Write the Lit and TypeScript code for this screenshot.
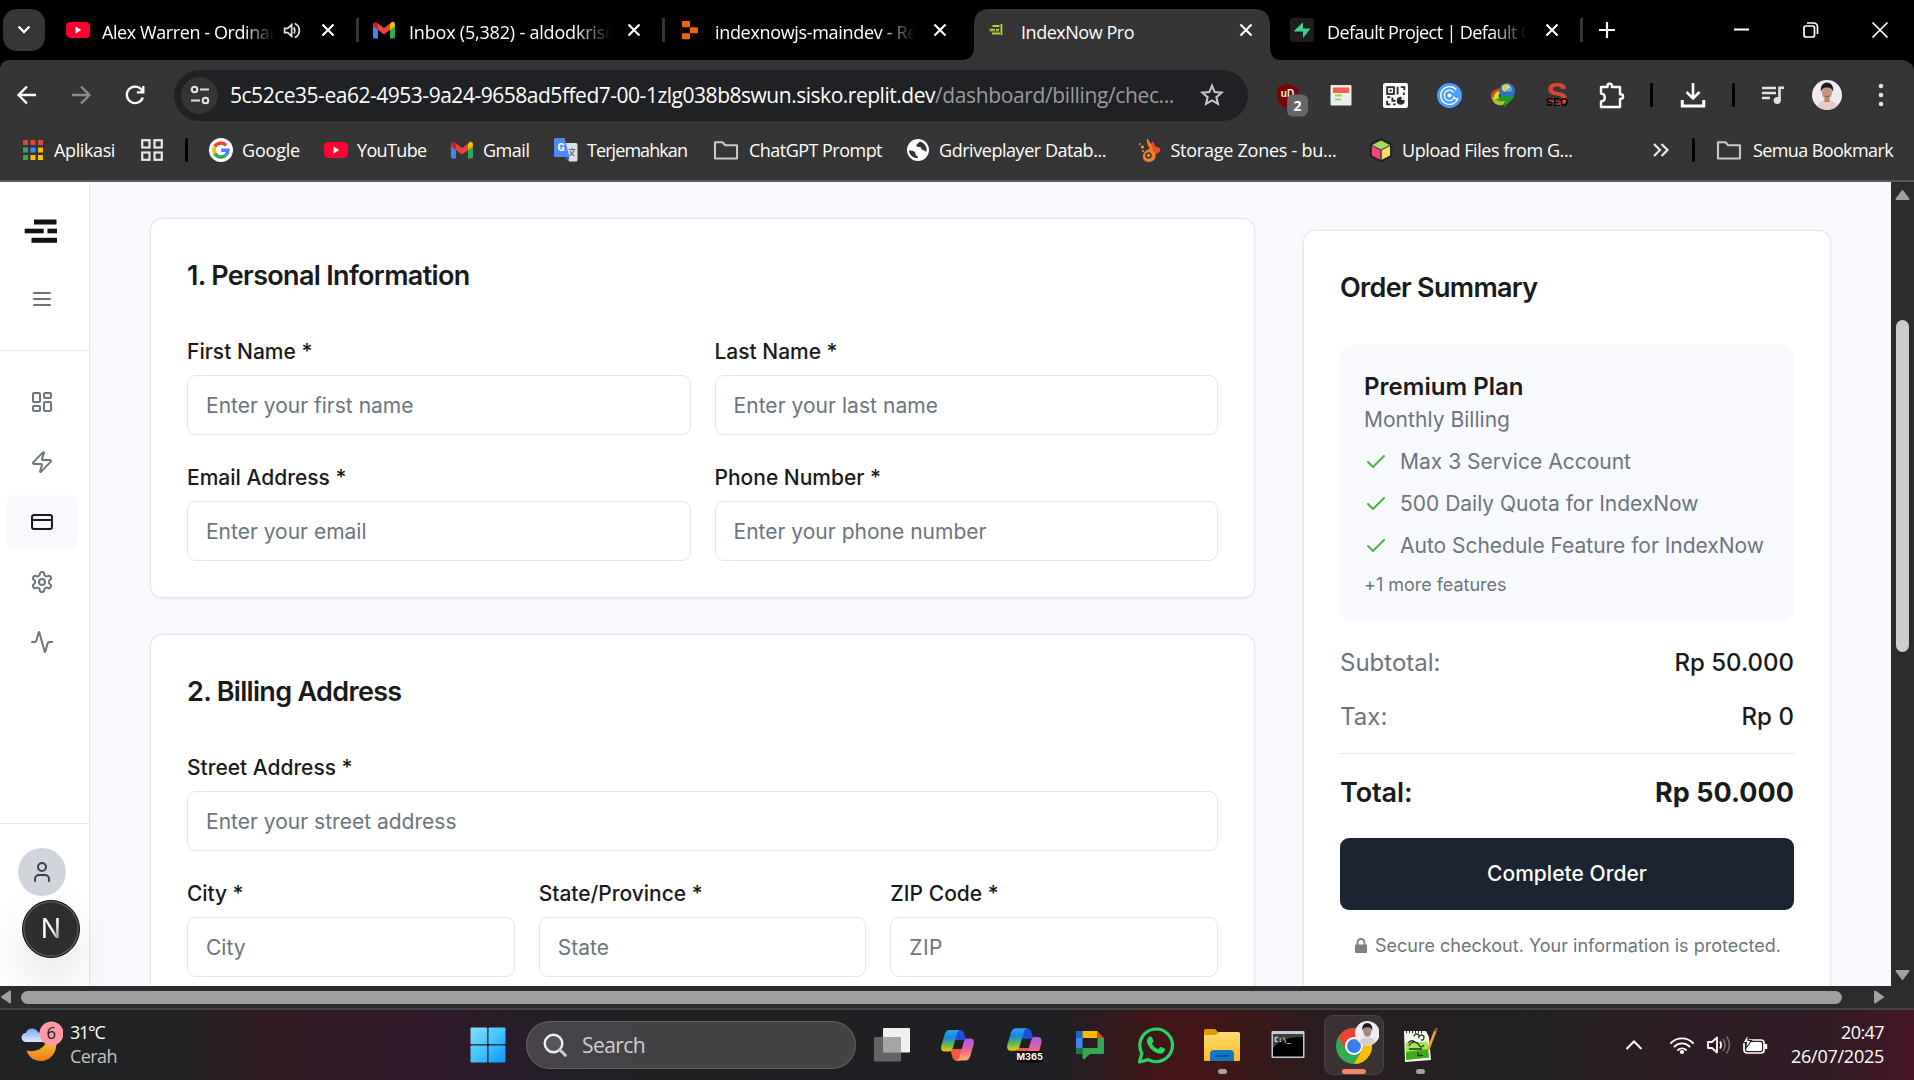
import { LitElement, html, css, svg, nothing } from "lit";
import { customElement, property } from "lit/decorators.js";
import { styleMap } from "lit/directives/style-map.js";

/* A single line of text tracked so that it fills a given advance width. */
@customElement("fit-text")
class FitText extends LitElement {
  static styles = css`
    :host { display: inline-block; white-space: pre; flex: none; }
    .t { display: inline-block; white-space: pre; }
  `;
  @property({ type: Number }) w = 0;
  @property() text = "";
  updated() {
    const el = this.renderRoot.querySelector(".t") as HTMLElement;
    el.style.letterSpacing = "0px";
    const natural = el.getBoundingClientRect().width;
    if (this.w > 0 && natural > 0) {
      el.style.letterSpacing = (this.w - natural) / this.text.length + "px";
    }
  }
  render() {
    return html`<span class="t">${this.text}</span>`;
  }
}

const t = (text: string, w: number) => html`<fit-text .text=${text} .w=${w}></fit-text>`;

const box = (w: number, h: number, vb: string, body: unknown) =>
  html`<svg width=${w} height=${h} viewBox=${vb} fill="none">${body}</svg>`;

const lucide = (body: unknown, size = 24) =>
  html`<svg width=${size} height=${size} viewBox="0 0 24 24" fill="none" stroke="currentColor" stroke-width="2" stroke-linecap="round" stroke-linejoin="round">${body}</svg>`;

/* ---------- browser icons ---------- */
const youtube = box(24, 24, "0 0 24 24", svg`
  <rect x="0" y="4" width="24" height="16" rx="4.2" fill="#ff0033"/><path d="M9.6 8.6v6.8l5.6-3.4z" fill="#fff"/>`);
const gmail = box(24, 24, "0 0 24 24", svg`
  <path d="M1 6v13a1.4 1.4 0 0 0 1.4 1.4H6V10z" fill="#4285f4"/>
  <path d="M23 6v13a1.4 1.4 0 0 1-1.4 1.4H18V10z" fill="#34a853"/>
  <path d="M18 5.8V12l5-3.8V6.4c0-2.3-2.3-3.4-3.9-2z" fill="#fbbc04"/>
  <path d="M6 12V5.4l6 4.6 6-4.6V12l-6 4.6z" fill="#ea4335"/>
  <path d="M1 6.4v1.8L6 12V5.4L4.9 4.5C3.3 3.2 1 4.2 1 6.4z" fill="#c5221f"/>`);
const replit = box(24, 24, "0 0 24 24", svg`
  <g fill="#f26207"><rect x="4" y="3" width="8" height="6.2" rx="1"/><rect x="11.8" y="9.2" width="8.2" height="6" rx="1"/><rect x="4" y="15.2" width="8" height="6" rx="1"/></g>`);
const indexFav = box(24, 24, "0 0 24 24", svg`
  <g fill="#b5cf3a"><rect x="8.5" y="7" width="7" height="2"/><rect x="5.5" y="10.8" width="5.5" height="2"/><rect x="12" y="10.800" width="3" height="2"/><rect x="8" y="14.500" width="8" height="2"/><rect x="16.500" y="6" width="1.800" height="11"/></g><rect x="6" y="12.800" width="9" height="1" fill="#6f8030"/>`);
const supabase = box(24, 24, "0 0 24 24", svg`
  <rect width="24" height="24" rx="3" fill="#1c1f1e"/><path d="M13 4.2v6.3h6.3c.7 0 .9.6.5 1.1L13 20.1v-6.6H4.8c-.6 0-.8-.6-.4-1.1z" fill="#3ecf8e"/>`);
const speaker = box(21, 21, "0 0 24 24", svg`
  <path d="M3 9.5v5h3.500l4.500 4V5.500l-4.500 4z" stroke="#e3e3e3" stroke-width="2"/><path d="M13.500 8.500q2.200 3.500 0 7M14.500 4c7 2.500 7 13.500 0 16" stroke="#e3e3e3" stroke-width="2"/>`);
const closeX = box(14, 14, "0 0 14 14", svg`<path d="M1.5 1.5l11 11m0-11l-11 11" stroke="#fff" stroke-width="2.2"/>`);
const back = box(24, 24, "0 0 24 24", svg`<path d="M21 12H4M12 3.5L3.5 12l8.5 8.5" stroke="#fff" stroke-width="2.3"/>`);
const forward = box(24, 24, "0 0 24 24", svg`<path d="M3 12h17M12 3.5l8.5 8.5-8.5 8.5" stroke="#8b8b8b" stroke-width="2.3"/>`);
const reload = box(24, 24, "0 0 24 24", svg`<path d="M19.8 14.5A8.2 8.2 0 1 1 18.3 6.5l2 2.3" stroke="#fff" stroke-width="2.3"/><path d="M20.3 3v6.4h-6.4" stroke="#fff" stroke-width="2.3"/>`);
const tune = box(24, 24, "0 0 24 24", svg`<g stroke="#e3e3e3" stroke-width="2.1"><circle cx="6.5" cy="6.5" r="2.8"/><path d="M12 6.5h9M3 17.5h9"/><circle cx="17.5" cy="17.5" r="2.8"/></g>`);
const star = box(26, 26, "0 0 24 24", svg`<path d="M12 3.4l2.5 5.9 6.4.55-4.85 4.2 1.45 6.25L12 17l-5.5 3.3 1.45-6.25L3.1 9.85l6.4-.55z" stroke="#c7c7c7" stroke-width="1.9"/>`);
const ublock = box(32, 36, "0 0 32 36", svg`
  <path d="M11.5 2C15 4.8 18.5 5.8 22 6v9c0 6-4.5 10-10.5 12.5C5.5 25 1 21 1 15V6c3.5-.2 7-1.2 10.5-4z" fill="#800000"/>
  <text x="11.500" y="16.200" font-family="Inter, sans-serif" font-size="10" font-weight="600" fill="#fff" text-anchor="middle">uD</text>
  <rect x="11" y="13.5" width="21" height="22" rx="6" fill="#666"/>
  <text x="21.5" y="29.800" font-family="Open Sans, sans-serif" font-size="14" font-weight="700" fill="#fff" text-anchor="middle">2</text>`);
const pageExt = box(24, 24, "0 0 24 24", svg`
  <rect x="1.5" y="2" width="21" height="20.5" rx="1" fill="#eee"/><rect x="4" y="4.5" width="16" height="5.5" fill="#fa5a50"/><path d="M6 12.5h7M6 16.5h6" stroke="#97d94a" stroke-width="2"/>`);
const qr = box(25, 25, "0 0 24 24", svg`
  <rect width="24" height="24" rx="2" fill="#fff"/><g stroke="#2b2b2b" stroke-width="1.8"><rect x="4" y="4" width="6.5" height="6.5"/><path d="M14 3.5v7.5M17 4h3.5v3M20 9v2.5M4 13.5h3M9 14v3h3M4 17v3.5h3M9.5 20.5h2.5"/></g><circle cx="17" cy="17" r="3.8" fill="#2b2b2b"/><path d="M17.8 12.5v3.8h4z" fill="#fff"/><rect x="6.3" y="6.3" width="2" height="2" fill="#2b2b2b"/>`);
const spiral = box(25, 25, "0 0 24 24", svg`
  <circle cx="12" cy="12" r="12" fill="#4a9eff"/><g stroke="#fff" stroke-width="1.2"><path d="M18.5 6.5a8.5 8.5 0 1 0 1.500 8.500q-3 1-4-2"/><path d="M16 9a5 5 0 1 0 .7 4.5"/></g><circle cx="12" cy="12" r="1.900" fill="#fff"/>`);
const idm = box(26, 26, "0 0 26 26", svg`
  <path d="M2 17c-2-5 1-10 8-10.500l3 4c-4 1-5 3-3 5.500l7 1-4 6C8 24 3.500 22 2 17z" fill="#a9c32b"/><path d="M1.500 15c0-5 3-8 8-8.500l1 1.800c-4 .8-6.500 3-6.500 6.700z" fill="#e33b20"/><path d="M4.500 17c-.5-5 2-7.500 6.500-8l1 1.800c-3.500.8-5 2.700-4.500 6.200z" fill="#f3d21f"/>
  <circle cx="17" cy="9" r="8" fill="#2d6fc4"/><path d="M12 4c3-3 7-2.500 8 0s-3 2-3.500 4.500-4 1-4.500-1z" fill="#c9cf63"/><circle cx="19" cy="7" r="3" fill="#fff" opacity=".35"/>
  <path d="M11 14l14 .5-11 11 .8-6.500c-3.500.8-7 0-9-2 2.500.3 4.600-.6 5.200-3z" fill="#1f9d27"/>`);
const seo = box(28, 28, "0 0 28 28", svg`
  <text x="14" y="24" font-family="Liberation Sans, sans-serif" font-size="32" font-weight="700" fill="#dd4430" text-anchor="middle">S</text>
  <text x="14" y="25" font-family="Liberation Sans, sans-serif" font-size="10.5" font-weight="700" fill="#000" text-anchor="middle">SEO</text>`);
const puzzle = box(28, 28, "0 0 28 28", svg`
  <path d="M4 6h6.5V4.8a2.2 2.2 0 0 1 4.4 0V6H23v7.3h.8a2.3 2.3 0 0 1 0 4.6H23V26H4v-5.5c5-.3 5-7.7 0-8z" stroke="#fff" stroke-width="2.4" stroke-linejoin="round"/>`);
const download = box(26, 26, "0 0 26 26", svg`<path d="M13 1v15M6.5 10l6.5 6.5 6.5-6.5" stroke="#fff" stroke-width="2.6"/><path d="M2.3 18v6h21.4v-6" stroke="#fff" stroke-width="3"/>`);
const queue = box(26, 26, "0 0 26 26", svg`<path d="M2 6h14M2 11h14M2 16h8" stroke="#e3e3e3" stroke-width="2.3"/><path d="M19.5 19V5.8h4.5" stroke="#e3e3e3" stroke-width="2.6"/><circle cx="17.2" cy="18.5" r="3.5" fill="#e3e3e3"/>`);
const face = (s: number) => box(s, s, "0 0 30 30", svg`
  <circle cx="15" cy="15" r="15" fill="#efedf2"/><path d="M5.5 26.5c1-5 5-6.5 9.5-6.5s8.5 1.5 9.5 6.500A15 15 0 0 1 15 30a15 15 0 0 1-9.500-3.500z" fill="#e6cdc8"/>
  <rect x="12.5" y="16" width="5" height="6" fill="#b8836f"/><ellipse cx="15" cy="12.5" rx="5" ry="6.8" fill="#c2937f"/><path d="M9 12c-1-6 2-9.5 6-9.5s7 3.5 6 9.5c-1-3-2-4.500-6-4.500s-5 1.500-6 4.500z" fill="#1d1b22"/><path d="M13 16q2 1.200 4 0" stroke="#7c4a40" stroke-width=".8"/>`);
const dots = box(6, 26, "0 0 6 26", svg`<g fill="#e3e3e3"><circle cx="3" cy="4" r="2.3"/><circle cx="3" cy="13" r="2.3"/><circle cx="3" cy="22" r="2.3"/></g>`);
const appsGrid = box(24, 24, "0 0 24 24", svg`
  <g fill="#ea4335"><rect x="2" y="2" width="5" height="5"/><rect x="9.5" y="2" width="5" height="5"/><rect x="17" y="2" width="5" height="5"/></g>
  <rect x="2" y="9.5" width="5" height="5" fill="#34a853"/><rect x="9.5" y="9.5" width="5" height="5" fill="#4285f4"/><rect x="17" y="9.5" width="5" height="5" fill="#fbbc04"/>
  <rect x="2" y="17" width="5" height="5" fill="#34a853"/><rect x="9.5" y="17" width="5" height="5" fill="#fbbc04"/><rect x="17" y="17" width="5" height="5" fill="#fbbc04"/>`);
const squares = box(24, 24, "0 0 24 24", svg`<g stroke="#e8e8e8" stroke-width="2.2"><rect x="2.2" y="2.2" width="7.3" height="7.3"/><rect x="14.5" y="2.2" width="7.3" height="7.3"/><rect x="2.2" y="14.5" width="7.3" height="7.3"/><rect x="14.5" y="14.5" width="7.3" height="7.3"/></g>`);
const google = box(24, 24, "0 0 24 24", svg`
  <circle cx="12" cy="12" r="12" fill="#fff"/><g stroke-width="3.4">
  <path d="M17.1 7.3A7 7 0 0 0 5.9 8.6" stroke="#ea4335"/><path d="M5.9 8.6a7 7 0 0 0 0 6.8" stroke="#fbbc04"/><path d="M5.9 15.4a7 7 0 0 0 10.6 2" stroke="#34a853"/><path d="M16.5 17.4A7 7 0 0 0 19 12.2h-6.800" stroke="#4285f4"/></g>`);
const translate = box(24, 24, "0 0 24 24", svg`
  <path d="M9 5h13a1.5 1.5 0 0 1 1.5 1.5v15.5a1.5 1.5 0 0 1-1.5 1.5h-7z" fill="#dcdfe3"/><path d="M1.5 0h9l5 19H1.5A1.5 1.5 0 0 1 0 17.5v-16A1.5 1.5 0 0 1 1.5 0z" fill="#4f8af4"/><path d="M11 19h4.5l-2 4.5z" fill="#3457c0"/>
  <text x="7" y="13" font-family="Roboto, sans-serif" font-size="10.5" font-weight="700" fill="#fff" text-anchor="middle">G</text><path d="M14.5 11.5h7M18 9.8v1.7M20 11.5c-.6 3-2.5 5-4.5 6M16 13c.8 2.3 2.5 4 4.5 5" stroke="#67727e" stroke-width="1.2"/>`);
const folder = box(26, 24, "0 0 26 24", svg`<path d="M2 4.3h7.5l2.700 3H24v13.200H2z" stroke="#c9c9c9" stroke-width="2.1" stroke-linejoin="round"/>`);
const globe = box(24, 24, "0 0 24 24", svg`<circle cx="12" cy="12" r="11" fill="#fff"/><path d="M3 12.5c3 0 6.5.5 6.5 3.500 0 2 2.500 1.500 2.500 4-4.500.5-9-3-9-7.500zM13.500 3.500c-.5 2-2.500 1.500-3 3.500s2 2 3.500 2 1 3 3 3 1.500 2 3.500 1.500c.8-5-2.300-9-7-10z" fill="#353535"/>`);
const bunny = box(24, 24, "0 0 24 24", svg`
  <path d="M9 0l4 6 2-2 2 4.500 5 2-1 3.500-3.500 2c1 5-2.500 8-7 8-4 0-6-3-5.500-6.500C5.500 14 8 12 12 10.500 9.500 8 8.500 4 9 0z" fill="#f7811e"/><path d="M13 6l2-3 2 5.500 5.500 2-1 3.500-4 1.500-3-3z" fill="#ea5325"/><circle cx="10.500" cy="17.500" r="2.500" stroke="#353535" stroke-width="1.500"/><circle cx="4.500" cy="9" r="1.600" fill="#f7a11e"/><circle cx="1.800" cy="6" r=".9" fill="#f7a11e"/><circle cx="5" cy="13" r="1" fill="#f7a11e"/>`);
const cube = box(24, 24, "0 0 24 24", svg`
  <path d="M12 .8l10.500 5.400v11.600L12 23.400 1.500 17.800V6.200z" stroke="#111" stroke-width="1.6" stroke-dasharray="1.5 1.2"/><path d="M12 2.500l8.800 4.500L12 11.500 3.200 7z" fill="#a6d95c"/><path d="M3 8l8.300 4.300v9.400L3 17.500z" fill="#f2467c"/><path d="M21 8l-8.300 4.300v9.400L21 17.500z" fill="#f9dc5c"/>`);
const more = box(20, 16, "0 0 20 16", svg`<path d="M3 2l6 6-6 6M10.500 2l6 6-6 6" stroke="#e8e8e8" stroke-width="2.2"/>`);

/* ---------- taskbar icons ---------- */
const weather = box(42, 44, "0 0 42 44", svg`
  <defs><linearGradient id="mn" x1="0" y1="0" x2="0" y2="1"><stop offset="0" stop-color="#f6c23c"/><stop offset="1" stop-color="#f07a16"/></linearGradient><linearGradient id="cl" x1="0" y1="0" x2="0" y2="1"><stop offset="0" stop-color="#7fa4ee"/><stop offset="1" stop-color="#dfe9fb"/></linearGradient></defs>
  <path d="M35 20c2 10-5 20-15 20-7 0-12-3.500-14.500-10.500C15 32 23 27 26 20z" fill="url(#mn)"/>
  <path d="M5 21a4.500 4.500 0 0 1 0-9C6 7 13.500 5.500 17 11l6 3v7z" fill="url(#cl)"/>
  <circle cx="30.500" cy="12.500" r="12" fill="#ff99a4"/><text x="30.300" y="18.300" font-family="Open Sans, sans-serif" font-size="16.500" fill="#1a1a1a" text-anchor="middle">6</text>`);
const start = box(36, 36, "0 0 36 36", svg`
  <defs><linearGradient id="wn" x1="0" y1="0" x2="36" y2="36" gradientUnits="userSpaceOnUse"><stop offset="0" stop-color="#88dffd"/><stop offset=".5" stop-color="#43c4fb"/><stop offset="1" stop-color="#0a94fb"/></linearGradient></defs>
  <g fill="url(#wn)"><rect x=".5" y=".5" width="16.8" height="16.8" rx="1"/><rect x="18.5" y=".5" width="17" height="16.8" rx="1"/><rect x=".5" y="18.5" width="16.8" height="17" rx="1"/><rect x="18.5" y="18.5" width="17" height="17" rx="1"/></g>`);
const search = box(24, 24, "0 0 24 24", svg`<circle cx="10.5" cy="10.5" r="8.8" fill="#fff" fill-opacity=".1" stroke="#eee" stroke-width="2.4"/><path d="M16.8 16.8l5.500 5.500" stroke="#ccc" stroke-width="3" stroke-linecap="round"/>`);
const taskview = box(36, 36, "0 0 36 36", svg`<rect x="9" y="1" width="27" height="24.5" rx="1" fill="#f0f0f0"/><rect x="0" y="10" width="27" height="24.5" rx="1.5" fill="#6a6a6a" fill-opacity=".9"/><path d="M9 10h18v15.5H9z" fill="#a5a5a5"/>`);
const copilotBody = svg`
  <defs><linearGradient id="cp1" x1="0" y1="0" x2="0" y2="1"><stop offset="0" stop-color="#2aa4f4"/><stop offset=".35" stop-color="#1a86e0"/><stop offset=".65" stop-color="#5cb55a"/><stop offset="1" stop-color="#f6c800"/></linearGradient>
  <linearGradient id="cp2" x1="0" y1="0" x2="0" y2="1"><stop offset="0" stop-color="#a65cf5"/><stop offset=".5" stop-color="#f0609a"/><stop offset="1" stop-color="#ffb35c"/></linearGradient></defs>
  <path d="M10 22h13l-2 9c-.5 2-2 3-3.500 3-4 0-4.500-2-6-7z" fill="#f4573a"/><path d="M12 13h14l-2-7c-.8-2.600-2.500-3-5-3H13z" fill="#1c4fd6"/>
  <path d="M9.500 3H21c-2.500 0-3.500 2-4 4l-4 13.500C12.300 23 11 24.500 8.500 24.500H4.500C1 24.500.5 21 1.500 18l3-10C5.500 5 6.500 3 9.500 3z" fill="url(#cp1)"/>
  <path d="M27.500 11.500h3c3.500 0 4 3.500 3 6.500l-3 10.500c-1 3-2.500 5-5.500 5h-9.500c2.500 0 3.500-2 4-4l4-13.500c.7-2.500 1.500-4.500 4-4.500z" fill="url(#cp2)"/>`;
const copilot = box(36, 36, "0 0 36 36", copilotBody);
const m365 = box(38, 38, "0 0 38 38", svg`<g transform="translate(1 -1) scale(1.05)">${copilotBody}</g><rect x="11.5" y="25" width="26.500" height="12" rx="2" fill="#0c0c0c"/><text x="24.700" y="34.300" font-family="Inter, sans-serif" font-size="9.2" font-weight="700" fill="#fff" text-anchor="middle">M365</text>`);
const chat = box(30, 30, "0 0 30 30", svg`
  <rect x="1" y="1" width="6.5" height="7" fill="#1967d2"/><path d="M7.500 1h15v7h-15z" fill="#fbbc04"/><path d="M22.500 1l6.500 7h-6.500z" fill="#ea4335"/><path d="M1 8h6.500v10H1z" fill="#4285f4"/><path d="M1 18h6.500v6H1z" fill="#188038"/><path d="M22.500 8H29v14.500a1.500 1.500 0 0 1-1.500 1.500H15l-6 5.500-1.500-1V18h15z" fill="#34a853"/>`);
const whatsapp = box(38, 38, "0 0 38 38", svg`
  <path d="M2.500 36l2.400-8.800A16.300 16.300 0 1 1 11.300 33.600z" stroke="#25d366" stroke-width="3.200" stroke-linejoin="round"/>
  <path d="M13.500 10.500c1 0 1.300.2 1.700 1.200l1.300 3c.2.600 0 1-.3 1.400l-1.200 1.500c1.500 2.800 3.500 4.500 6.300 5.700l1.600-1.900c.4-.5.8-.6 1.400-.3l3.200 1.500c.5.300.6.6.5 1.200-.4 2.500-2.500 4-5 3.900-6.500-.8-12-6.300-13-12.200-.2-2.500 1.300-5 3.500-5z" fill="#25d366"/>`);
const explorer = box(38, 36, "0 0 38 36", svg`
  <defs><linearGradient id="fd" x1="0" y1="0" x2="0" y2="1"><stop offset="0" stop-color="#ffdc6e"/><stop offset="1" stop-color="#fcbc23"/></linearGradient></defs>
  <path d="M1 3.500A1.500 1.500 0 0 1 2.500 2H12l4 4-4 4H1z" fill="#dd9c10"/><path d="M1 8h12l3-3h19.500A1.500 1.500 0 0 1 37 6.500V33a1 1 0 0 1-1 1H2a1 1 0 0 1-1-1z" fill="url(#fd)"/><path d="M7 34v-7a4 4 0 0 1 4-4h16a4 4 0 0 1 4 4v7z" fill="#1476c6"/><path d="M12 29h14" stroke="#0b4f8e" stroke-width="1.500"/>`);
const cmd = box(34, 30, "0 0 34 30", svg`
  <rect x=".5" y="1" width="33" height="27" rx="1" fill="#c3ccd4"/><rect x="2" y="4" width="30" height="22.5" fill="#000"/><path d="M2 4h30v3C18 7 9 10 2 18z" fill="#3f3f3f"/><text x="3" y="12" font-family="DejaVu Sans Mono, monospace" font-size="7" font-weight="700" fill="#eee">C:\\_</text>`);
const chrome = box(50, 48, "0 0 50 48", svg`
  <g transform="translate(7 7)"><circle cx="18" cy="18" r="18" fill="#34a853"/><path d="M2.400 9A18 18 0 0 1 33.600 9H18a9 9 0 0 0-7.800 13.500z" fill="#ea4335"/><path d="M33.600 9A18 18 0 0 1 18 36l7.800-13.500A9 9 0 0 0 18 9z" fill="#fbbc04"/><circle cx="18" cy="18" r="9" fill="#fff"/><circle cx="18" cy="18" r="7" fill="#3b7ded"/></g>
  <g transform="translate(26 0) scale(.82)"><circle cx="15" cy="15" r="15" fill="#efedf2"/><path d="M5.500 26.500c1-5 5-6.500 9.500-6.500s8.500 1.500 9.500 6.500A15 15 0 0 1 15 30a15 15 0 0 1-9.500-3.500z" fill="#d9cdd0"/><ellipse cx="15" cy="12.500" rx="5" ry="6.800" fill="#a98680"/><path d="M9 12c-1-6 2-9.500 6-9.500s7 3.500 6 9.500c-1-3-2-4.500-6-4.500s-5 1.500-6 4.500z" fill="#1d1b22"/></g>`);
const notepad = box(36, 36, "0 0 36 36", svg`
  <path d="M2 4h22l3 6 2 23-26 2z" fill="#f4f4f0"/><path d="M4 5h18" stroke="#333" stroke-width="2.500" stroke-dasharray="1 2"/><path d="M3.500 16l22-1.500 1.500 16-23 2.500z" fill="#a4e653"/><path d="M4 25l22-3 1 8.500-23 2.500z" fill="#3cab1c"/>
  <path d="M7 19c2-5 8-5 10-1s4 1 5 0M7 22h13M12 9.500a2.500 2.500 0 1 1 4.500 1.500M17 10a2.500 2.500 0 1 1 2 3M16 25v3.500h5M6 16c2-3 6-3 8 0" stroke="#26361c" stroke-width="1.300"/><path d="M33.500 3.500L26 23" stroke="#e8a62c" stroke-width="2.600"/><path d="M34.800 1l-1.500 3.500" stroke="#8d4a33" stroke-width="2.800"/>`);
const trayUp = box(18, 12, "0 0 18 12", svg`<path d="M1.500 10L9 2.500l7.500 7.500" stroke="#fff" stroke-width="2"/>`);
const wifi = box(26, 20, "0 0 26 20", svg`<g stroke="#fff" stroke-width="1.9" stroke-linecap="round"><path d="M2 8a15.500 15.500 0 0 1 22 0M5.500 11.500a10.600 10.600 0 0 1 15 0M9 15a5.700 5.700 0 0 1 8 0"/></g><circle cx="13" cy="17" r="2.1" fill="#fff"/>`);
const volume = box(26, 22, "0 0 26 22", svg`<path d="M2 8v6h4l5 4.500v-15L6 8z" stroke="#fff" stroke-width="1.8" stroke-linejoin="round"/><path d="M14 7.500q2.200 3.500 0 7" stroke="#fff" stroke-width="1.8"/><path d="M17 5q4 6 0 12M20.500 2.500q6 8.500 0 17" stroke="#75676d" stroke-width="1.7"/>`);
const battery = box(26, 22, "0 0 26 22", svg`<rect x="2" y="6" width="20" height="13" rx="3" stroke="#fff" stroke-width="1.7"/><rect x="4" y="8" width="16" height="9" rx="1.500" fill="#fff"/><path d="M24 10v5" stroke="#fff" stroke-width="2.400"/><path d="M6 0L1 8.500h3.500L3.500 15l6-8.500H6z" fill="#fff" stroke="#2c1d25" stroke-width="1.200"/>`);

/* ---------- app icons ---------- */
const dash = lucide(svg`<rect width="7" height="9" x="3" y="3" rx="1"/><rect width="7" height="5" x="14" y="3" rx="1"/><rect width="7" height="9" x="14" y="12" rx="1"/><rect width="7" height="5" x="3" y="16" rx="1"/>`);
const zap = lucide(svg`<path d="M4 14a1 1 0 0 1-.78-1.63l9.9-10.2a.5.5 0 0 1 .86.46l-1.92 6.02A1 1 0 0 0 13 10h7a1 1 0 0 1 .78 1.63l-9.9 10.2a.5.5 0 0 1-.86-.46l1.92-6.02A1 1 0 0 0 11 14z"/>`);
const card = lucide(svg`<rect width="20" height="14" x="2" y="5" rx="2"/><path d="M2 10h20"/>`);
const gear = lucide(svg`<path d="M12.22 2h-.44a2 2 0 0 0-2 2v.18a2 2 0 0 1-1 1.73l-.43.25a2 2 0 0 1-2 0l-.15-.08a2 2 0 0 0-2.73.73l-.22.38a2 2 0 0 0 .73 2.73l.15.1a2 2 0 0 1 1 1.72v.51a2 2 0 0 1-1 1.74l-.15.09a2 2 0 0 0-.73 2.73l.22.38a2 2 0 0 0 2.73.73l.15-.08a2 2 0 0 1 2 0l.43.25a2 2 0 0 1 1 1.73V20a2 2 0 0 0 2 2h.44a2 2 0 0 0 2-2v-.18a2 2 0 0 1 1-1.73l.43-.25a2 2 0 0 1 2 0l.15.08a2 2 0 0 0 2.73-.73l.22-.39a2 2 0 0 0-.73-2.73l-.15-.08a2 2 0 0 1-1-1.74v-.5a2 2 0 0 1 1-1.74l.15-.09a2 2 0 0 0 .73-2.73l-.22-.38a2 2 0 0 0-2.73-.73l-.15.08a2 2 0 0 1-2 0l-.43-.25a2 2 0 0 1-1-1.73V4a2 2 0 0 0-2-2z"/><circle cx="12" cy="12" r="3"/>`);
const activity = lucide(svg`<path d="M22 12h-2.48a2 2 0 0 0-1.93 1.46l-2.35 8.36a.25.25 0 0 1-.48 0L9.24 2.18a.25.25 0 0 0-.48 0l-2.35 8.36A2 2 0 0 1 4.49 12H2"/>`);
const menu = lucide(svg`<path d="M4 6h16M4 12h16M4 18h16"/>`);
const user = lucide(svg`<path d="M19 21v-2a4 4 0 0 0-4-4H9a4 4 0 0 0-4 4v2"/><circle cx="12" cy="7" r="4"/>`);
const check = html`<svg width="24" height="24" viewBox="0 0 24 24" fill="none" stroke="#4bb543" stroke-width="2" stroke-linecap="round" stroke-linejoin="round"><path d="M20 6L9 17l-5-5"/></svg>`;
const logo = box(34, 26, "0 0 34 26", svg`<g fill="#111"><rect x="10" y="1.5" width="22.500" height="5"/><rect x="0.7" y="10.7" width="19" height="4.6"/><rect x="23.500" y="10.7" width="9.500" height="4.6"/><rect x="7.500" y="19.800" width="25.500" height="5"/></g>`);
const lock = box(14, 16, "0 0 14 16", svg`<path d="M3.500 7V4.500a3.500 3.500 0 0 1 7 0V7" stroke="#808080" stroke-width="1.900"/><rect x="1" y="6.500" width="12" height="8.500" rx="1" fill="#808080"/>`);
const tri = (pts: string, w: number, h: number) => box(w, h, `0 0 ${w} ${h}`, svg`<polygon points=${pts} fill="#a0a0a0" stroke="#a0a0a0" stroke-width="2" stroke-linejoin="round"/>`);

const tabs = [
  { icon: youtube, text: "Alex Warren - Ordinary", w: 183, clip: 172, audio: true },
  { icon: gmail, text: "Inbox (5,382) - aldodkris@", w: 212, clip: 202 },
  { icon: replit, text: "indexnowjs-maindev - Repl", w: 217, clip: 200 },
  { icon: indexFav, text: "IndexNow Pro", w: 113, clip: 202, active: true },
  { icon: supabase, text: "Default Project | Default Or", w: 214, clip: 200 },
];

const bookmarks = [
  { icon: google, text: "Google", w: 58, box: 57 },
  { icon: youtube, text: "YouTube", w: 69.5, box: 68 },
  { icon: gmail, text: "Gmail", w: 46.5, box: 46 },
  { icon: translate, text: "Terjemahkan", w: 100, box: 101 },
  { icon: folder, text: "ChatGPT Prompt", w: 133, box: 132, wide: true },
  { icon: globe, text: "Gdriveplayer Datab...", w: 167, box: 173.5 },
  { icon: bunny, text: "Storage Zones - bu...", w: 166, box: 173.5 },
  { icon: cube, text: "Upload Files from G...", w: 170.5, box: 174 },
];

@customElement("app-root")
class AppRoot extends LitElement {
  static styles = css`
    :host { display: block; width: 1914px; height: 1080px; overflow: hidden; font-family: Inter, "Liberation Sans", sans-serif; }
    * { box-sizing: border-box; }
    svg { display: block; flex: none; }
    .screen { display: flex; flex-direction: column; width: 1914px; height: 1080px; background: #000; }
    .ui { font-family: "Open Sans", "Noto Sans", sans-serif; font-size: 18px; font-stretch: 92%; color: #fff; }

    /* tab strip */
    .tabs { display: flex; height: 60px; padding-left: 3px; background: #000; }
    .tabmenu { display: flex; align-items: center; justify-content: center; width: 42px; height: 42px; margin: 9px 7px 0 0; border-radius: 14px; background: #363636; }
    .tab { display: flex; align-items: center; position: relative; width: 306px; padding: 0 23px 0 14px; }
    .tab.idle-sep::after { content: ""; position: absolute; right: -1px; top: 18px; width: 3px; height: 24px; background: #353535; }
    .tab .label { margin: 3px 0 0 12px; overflow: hidden; line-height: 28px; }
    .tab:not(:nth-child(2)) .label { margin-left: 13px; }
    .tab .fade { mask-image: linear-gradient(90deg, #000 82%, transparent 100%); -webkit-mask-image: linear-gradient(90deg, #000 82%, transparent 100%); }
    .tab .audio { margin-left: 8px; }
    .tab .x { margin-left: auto; }
    .tab > * { z-index: 1; }
    .tab .shape { position: absolute; z-index: 0; left: -8px; bottom: 0; }
    .plus { display: flex; align-items: center; width: 120px; padding-left: 16px; }
    .winbtns { display: flex; align-items: center; margin-left: auto; padding-right: 25px; gap: 51px; }

    /* toolbar */
    .chrome { background: #353535; height: 122px; border-radius: 9px 12px 0 0; border-bottom: 2px solid #5a5a5a; flex: none; }
    .toolbar { display: flex; align-items: center; height: 70px; }
    .nav { display: flex; gap: 30px; padding-left: 15px; width: 174px; }
    .url { display: flex; align-items: center; width: 1074px; height: 51px; border-radius: 26px; background: #202124; padding: 0 23px 0 7px; font-size: 21px; line-height: 30px; }
    .url > fit-text, .path { margin-top: -1px; }
    .tune { display: flex; align-items: center; justify-content: center; width: 37px; height: 37px; border-radius: 50%; background: #353535; margin-right: 12px; }
    .path { color: #9a9a9a; }
    .star { margin-left: auto; }
    .ext { display: flex; align-items: center; margin-left: 12px; }
    .slot { display: flex; align-items: center; justify-content: center; width: 54px; height: 40px; }
    .first svg { margin: 7px 0 0 10px; }
    .vsep { width: 3px; height: 24px; background: #000; border-radius: 1px; }
    .ext .vsep.a { margin-left: 12px; }
    .dl { width: 79px; }
    .ext .vsep.b { margin-right: 11px; }

    /* bookmarks bar */
    .marks { display: flex; align-items: center; height: 40px; padding: 0 21px; line-height: 26px; }
    .marks fit-text { margin-top: -1px; }
    .mark { display: flex; align-items: center; gap: 9px; margin-right: 25px; }
    .mark.wide { gap: 10px; }
    .marks .vsep { margin: 0 21px; }
    .marks .end { margin-left: auto; display: flex; align-items: center; }
    .marks .end .mark { margin: 0; gap: 11px; }

    /* viewport */
    .view { display: flex; height: 804px; flex: none; }
    .page { display: flex; width: 1891px; height: 804px; overflow: hidden; background: #f8f9fd; }
    .side { position: relative; display: flex; flex-direction: column; width: 90px; border-right: 1px solid #e0e6ed; background: #fff; color: #6c757d; }
    .brand { display: flex; flex-direction: column; align-items: center; height: 169px; border-bottom: 1px solid #e0e6ed; padding: 36px 6px 0 0; gap: 43px; }
    .brand svg:first-child { margin-right: 2px; }
    .links { display: flex; flex-direction: column; gap: 6px; padding: 24px 12px 0 6px; }
    .link { display: flex; align-items: center; justify-content: center; height: 54px; border-radius: 9px; }
    .link.on { background: #f8f9fd; color: #1a1a1a; }
    .foot { margin-top: auto; height: 163px; border-top: 1px solid #e5e7eb; padding: 24px 0 0 18px; }
    .avatar { display: flex; align-items: center; justify-content: center; width: 48px; height: 48px; border-radius: 50%; background: #d1d5db; color: #374151; }
    .next { position: absolute; left: 22px; top: 718px; width: 58px; height: 58px; border-radius: 50%; background: #2e2e2e; border: 1px solid #111; box-shadow: inset 0 0 0 1.5px #5a5a5a, 0 24px 48px rgba(0,0,0,.12); z-index: 3; display: flex; align-items: center; justify-content: center; font-size: 27px; font-weight: 400; line-height: 58px; }
    .next span { background: linear-gradient(120deg, #fff 55%, #555 85%); -webkit-background-clip: text; background-clip: text; color: transparent; }
    .content { display: flex; align-items: flex-start; padding: 36px 0 0 60px; gap: 48px; }
    .forms { display: flex; flex-direction: column; gap: 36px; width: 1105px; }
    .card { background: #fff; border: 1px solid #e0e6ed; border-radius: 12px; padding: 36px; box-shadow: 0 1px 3px rgba(16,24,40,.07); color: #1a1a1a; }
    .h { font-size: 27px; font-weight: 600; line-height: 41px; height: 41px; }
    .grid { display: grid; grid-template-columns: repeat(6, 1fr); gap: 27px 24px; margin-top: 40px; }
    .half { grid-column: span 3; }
    .third { grid-column: span 2; }
    .full { grid-column: span 6; }
    .field { display: flex; flex-direction: column; gap: 8px; font-size: 21px; line-height: 31px; }
    .name { font-weight: 500; height: 31px; }
    .input { display: flex; align-items: center; height: 60px; border: 1px solid #e0e6ed; border-radius: 9px; padding: 0 18px; color: #6c757d; }
    .rest { height: 60px; }
    .order { width: 528px; height: 900px; margin-top: 12px; }
    .plan { margin-top: 37px; height: 276px; border-radius: 12px; background: #f8f9fd; padding: 24px; color: #6c757d; font-size: 21px; }
    .pname { font-size: 24px; font-weight: 600; line-height: 35px; height: 35px; color: #1a1a1a; }
    .cycle { line-height: 31px; height: 31px; }
    .feats { display: flex; flex-direction: column; gap: 12px; margin-top: 12px; line-height: 30px; }
    .feat { display: flex; align-items: center; height: 30px; gap: 12px; }
    .extra { font-size: 18px; line-height: 24px; height: 24px; margin-top: 12px; }
    .lines { display: flex; flex-direction: column; gap: 19px; margin-top: 24px; padding-bottom: 19px; border-bottom: 1px solid #e0e6ed; font-size: 24px; line-height: 35px; }
    .line { display: flex; justify-content: space-between; height: 35px; }
    .line .k { color: #6c757d; }
    .line .v { font-weight: 500; }
    .total { display: flex; justify-content: space-between; margin-top: 18px; font-size: 27px; font-weight: 600; line-height: 41px; height: 41px; }
    .total .v { font-weight: 700; }
    .cta { display: flex; align-items: center; justify-content: center; margin-top: 25px; height: 72px; border-radius: 9px; background: #1c2331; color: #fff; font-size: 21px; font-weight: 500; padding-bottom: 1px; }
    .secure { display: flex; align-items: center; justify-content: center; gap: 7px; padding-left: 1px; margin-top: 24px; height: 24px; font-size: 18px; line-height: 24px; color: #6c757d; }

    /* scrollbars */
    .vbar { display: flex; flex-direction: column; align-items: center; width: 23px; background: #2c2c2c; padding: 7px 0 5px; }
    .vthumb { width: 13px; height: 332px; margin-top: 120px; border-radius: 7px; background: #cdcdcd; }
    .vbar svg:last-child { margin-top: auto; }
    .hbar { display: flex; align-items: center; height: 24px; background: #2c2c2c; border-bottom: 2px solid #444244; flex: none; }
    .hthumb { width: 1821px; height: 13px; margin: 0 31px 0 9px; border-radius: 7px; background: #9f9f9f; }

    /* taskbar */
    .task { display: flex; align-items: center; height: 70px; padding-bottom: 1px; background: linear-gradient(90deg, #202223 0, #202223 170px, #321a24 270px, #30192a 430px, #241e28 540px, #202023 640px, #201f23 1060px, #441517 1165px, #441517 1205px, #281d1f 1330px, #212122 1520px, #2c1d25 1660px, #301b25 1820px, #451528 1914px); }
    .wx { display: flex; align-items: center; width: 470px; padding-left: 21px; gap: 7px; line-height: 24px; }
    .wx svg { margin-top: -4px; }
    .two { display: flex; flex-direction: column; margin-top: -1px; }
    .two .dim { color: #c5c5c5; }
    .find { display: flex; align-items: center; width: 330px; height: 48px; border-radius: 24px; margin: 0 3px 0 20px; padding-left: 16px; gap: 15px; background: rgba(255,255,255,.16); border: 1px solid rgba(255,255,255,.16); font-size: 21px; color: #d0d0d0; }
    .apps { display: flex; }
    .app { position: relative; display: flex; align-items: center; justify-content: center; width: 60px; height: 60px; margin: 0 3px; border-radius: 9px; }
    .app.on { background: rgba(255,255,255,.09); border: 1px solid rgba(255,255,255,.08); }
    .app i { position: absolute; bottom: 1px; width: 9px; height: 5px; border-radius: 3px; background: #a3a0a1; }
    .app.on i { bottom: 0; width: 24px; background: #f58568; }
    .tray { display: flex; align-items: center; margin-left: auto; padding-right: 30px; line-height: 24px; }
    .tray .up { margin-right: 26px; }
    .tray .wf { margin-right: 11px; }
    .tray .vol { margin-right: 10px; }
    .tray .two { margin-left: 23px; align-items: flex-end; }
  `;

  tab(d: any, i: number) {
    return html`<div class="tab ${i < 2 || i === 4 ? "idle-sep" : ""}">
      ${d.active ? html`<svg class="shape" width="318" height="51" viewBox="0 0 318 51"><path d="M0 51C8 51 12 46 12 38V16Q12 0 28 0H292Q308 0 308 16V38C308 46 312 51 318 51z" fill="#353535"/></svg>` : nothing}
      ${d.icon}
      <div class="label ${d.active ? "" : "fade"}" style=${styleMap({ width: d.clip + "px" })}>${t(d.text, d.w)}</div>
      ${d.audio ? html`<div class="audio">${speaker}</div>` : nothing}
      <div class="x">${closeX}</div>
    </div>`;
  }

  field(name: string, nw: number, ph: string, pw: number, span: string) {
    return html`<div class="field ${span}"><div class="name">${t(name, nw)}</div><div class="input">${t(ph, pw)}</div></div>`;
  }

  app(icon: unknown, dot = false, on = false) {
    return html`<div class="app ${on ? "on" : ""}">${icon}${dot ? html`<i></i>` : nothing}</div>`;
  }

  render() {
    return html`<div class="screen">
      <div class="tabs ui">
        <div class="tabmenu">${box(14, 10, "0 0 14 10", svg`<path d="M1.5 1.5L7 7l5.5-5.5" stroke="#fff" stroke-width="2.3"/>`)}</div>
        ${tabs.map((d, i) => this.tab(d, i))}
        <div class="plus">${box(18, 18, "0 0 18 18", svg`<path d="M9 1v16M1 9h16" stroke="#fff" stroke-width="2.2"/>`)}</div>
        <div class="winbtns">
          ${box(18, 18, "0 0 18 18", svg`<path d="M1 8.5h15" stroke="#fff" stroke-width="2"/>`)}
          ${box(18, 18, "0 0 18 18", svg`<rect x="2" y="5" width="10.5" height="11" rx="2" stroke="#fff" stroke-width="1.7"/><path d="M5 2h6.5a4 4 0 0 1 4 4v7" stroke="#fff" stroke-width="1.7"/>`)}
          ${box(18, 18, "0 0 18 18", svg`<path d="M1.5 1.5l15 15m0-15l-15 15" stroke="#fff" stroke-width="1.7"/>`)}
        </div>
      </div>
      <div class="chrome ui">
        <div class="toolbar">
          <div class="nav">${back}${forward}${reload}</div>
          <div class="url">
            <div class="tune">${tune}</div>
            ${t("5c52ce35-ea62-4953-9a24-9658ad5ffed7-00-1zlg038b8swun.sisko.replit.dev", 705)}
            <span class="path">${t("/dashboard/billing/chec...", 239)}</span>
            <div class="star">${star}</div>
          </div>
          <div class="ext">
            <div class="slot first">${ublock}</div>
            <div class="slot">${pageExt}</div><div class="slot">${qr}</div><div class="slot">${spiral}</div>
            <div class="slot">${idm}</div><div class="slot">${seo}</div><div class="slot">${puzzle}</div>
            <div class="vsep a"></div>
            <div class="slot dl">${download}</div>
            <div class="vsep b"></div>
            <div class="slot">${queue}</div><div class="slot">${face(30)}</div><div class="slot">${dots}</div>
          </div>
        </div>
        <div class="marks">
          <div class="mark">${appsGrid}${t("Aplikasi", 61)}</div>
          ${squares}
          <div class="vsep"></div>
          ${bookmarks.map((b) => html`<div class="mark ${b.wide ? "wide" : ""}">${b.icon}<div style=${styleMap({ width: b.box + "px" })}>${t(b.text, b.w)}</div></div>`)}
          <div class="end">${more}<div class="vsep"></div><div class="mark">${folder}${t("Semua Bookmark", 140)}</div></div>
        </div>
      </div>

      <div class="view">
        <div class="page">
          <div class="side">
            <div class="brand">${logo}${menu}</div>
            <div class="links">
              <div class="link">${dash}</div><div class="link">${zap}</div><div class="link on">${card}</div><div class="link">${gear}</div><div class="link">${activity}</div>
            </div>
            <div class="foot"><div class="avatar">${user}</div></div>
            <div class="next"><span>N</span></div>
          </div>
          <div class="content">
            <div class="forms">
              <section class="card">
                <div class="h">${t("1. Personal Information", 282.5)}</div>
                <div class="grid">
                  ${this.field("First Name *", 125.5, "Enter your first name", 207.5, "half")}
                  ${this.field("Last Name *", 123, "Enter your last name", 204.5, "half")}
                  ${this.field("Email Address *", 159.5, "Enter your email", 160.5, "half")}
                  ${this.field("Phone Number *", 166.5, "Enter your phone number", 253, "half")}
                </div>
              </section>
              <section class="card">
                <div class="h">${t("2. Billing Address", 214.5)}</div>
                <div class="grid">
                  ${this.field("Street Address *", 165.5, "Enter your street address", 250.5, "full")}
                  ${this.field("City *", 56.5, "City", 39.5, "third")}
                  ${this.field("State/Province *", 164, "State", 51.5, "third")}
                  ${this.field("ZIP Code *", 108.5, "ZIP", 33.5, "third")}
                </div>
                <div class="rest"></div>
              </section>
            </div>
            <section class="card order">
              <div class="h">${t("Order Summary", 197.5)}</div>
              <div class="plan">
                <div class="pname">${t("Premium Plan", 159.5)}</div>
                <div class="cycle">${t("Monthly Billing", 146)}</div>
                <div class="feats">
                  <div class="feat">${check}${t("Max 3 Service Account", 231)}</div>
                  <div class="feat">${check}${t("500 Daily Quota for IndexNow", 298.5)}</div>
                  <div class="feat">${check}${t("Auto Schedule Feature for IndexNow", 364)}</div>
                </div>
                <div class="extra">${t("+1 more features", 142.5)}</div>
              </div>
              <div class="lines">
                <div class="line"><span class="k">${t("Subtotal:", 100.5)}</span><span class="v">${t("Rp 50.000", 119.5)}</span></div>
                <div class="line"><span class="k">${t("Tax:", 47.5)}</span><span class="v">${t("Rp 0", 52.5)}</span></div>
              </div>
              <div class="total"><span>${t("Total:", 72.5)}</span><span class="v">${t("Rp 50.000", 139)}</span></div>
              <div class="cta">${t("Complete Order", 160)}</div>
              <div class="secure">${lock}${t("Secure checkout. Your information is protected.", 406)}</div>
            </section>
          </div>
        </div>
        <div class="vbar">${tri("7.5,2 13.5,10 1.5,10", 15, 11)}<div class="vthumb"></div>${tri("7.5,10 13.5,2 1.5,2", 15, 12)}</div>
      </div>
      <div class="hbar">${tri("2,7 10,1.5 10,12.5", 12, 14)}<div class="hthumb"></div>${tri("10,7 2,1.5 2,12.5", 12, 14)}</div>

      <div class="task ui">
        <div class="wx">${weather}<div class="two">${t("31°C", 34.5)}<span class="dim">${t("Cerah", 47)}</span></div></div>
        ${start}
        <div class="find">${search}${t("Search", 63)}</div>
        <div class="apps">
          ${this.app(taskview)}${this.app(copilot)}${this.app(m365)}${this.app(chat)}${this.app(whatsapp)}
          ${this.app(explorer, true)}${this.app(cmd)}${this.app(chrome, true, true)}${this.app(notepad, true)}
        </div>
        <div class="tray">
          <div class="up">${trayUp}</div><div class="wf">${wifi}</div><div class="vol">${volume}</div>${battery}
          <div class="two">${t("20:47", 43)}${t("26/07/2025", 93)}</div>
        </div>
      </div>
    </div>`;
  }
}
